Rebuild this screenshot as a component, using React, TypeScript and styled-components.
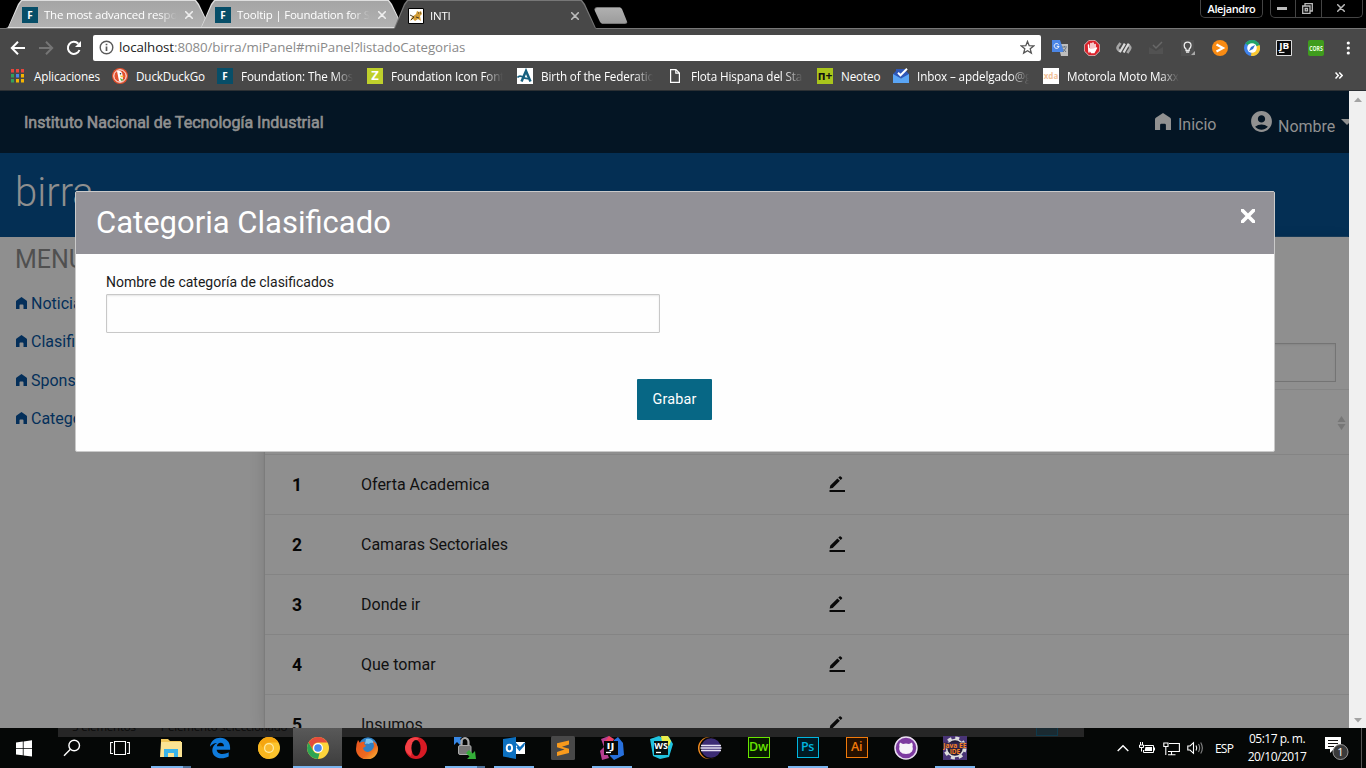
import React from "react";
import styled, { createGlobalStyle, css } from "styled-components";
import { MdAccountCircle } from "react-icons/md";

const Global = createGlobalStyle`
  *, *::before, *::after { box-sizing: border-box; }
  body { margin: 0; background: #000; overflow: hidden; }
  svg { display: block; flex: none; }
`;

const uiFont = css`font-family: "Open Sans", "Noto Sans", sans-serif;`;

const Screen = styled.div`
  width: 1366px;
  height: 768px;
  display: flex;
  flex-direction: column;
  overflow: hidden;
  ${uiFont}
`;

/* ---------- Browser ---------- */

const TabStrip = styled.div`
  height: 28px;
  flex: none;
  display: flex;
  padding-left: 6px;
  background: #000;
`;

const Tab = styled.div<{ $active?: boolean }>`
  position: relative;
  z-index: ${(p) => (p.$active ? 2 : 1)};
  width: 206px;
  height: ${(p) => (p.$active ? 29 : 28)}px;
  margin-right: -13px;
  padding: 2px 0 0 16px;
  display: flex;
  align-items: center;
  color: #fff;
  font-size: 12px;
  background: ${(p) => (p.$active ? "#777" : "#dedede")};
  clip-path: polygon(0 100%, 2px 97%, 12px 4px, 15px 0, 190px 0, 193px 4px, 204px 97%, 206px 100%);
  &::before {
    content: "";
    position: absolute;
    z-index: -1;
    inset: 1px 1px ${(p) => (p.$active ? 0 : 1)}px;
    background: ${(p) => (p.$active ? "#484848" : "linear-gradient(#a5a5a5, #b2b2b2)")};
    clip-path: polygon(0 100%, 2px 97%, 12px 4px, 15px 0, 188px 0, 191px 4px, 202px 97%, 204px 100%);
  }
`;

const TabTitle = styled.span`
  width: 133px;
  margin: 0 8px 0 6px;
  overflow: hidden;
  white-space: nowrap;
  font-size: 11.5px;
  letter-spacing: -0.22px;
  line-height: 18px;
  mask-image: linear-gradient(90deg, #000 86%, transparent);
`;

const NewTab = styled.div`
  width: 34px;
  height: 17px;
  margin: 7px 0 0 9px;
  border-radius: 3px;
  background: linear-gradient(#b0b0b0, #9c9c9c);
  border: 1px solid #777;
  clip-path: polygon(1px 0, 26px 0, 28px 2px, 34px 100%, 8px 100%, 6px 15px, 0 2px);
`;

const WindowButtons = styled.div`
  margin-left: auto;
  padding-right: 3px;
  display: flex;
  gap: 7px;
`;

const Profile = styled.div`
  width: 63px;
  height: 18px;
  border: 1px solid #444;
  border-top: 0;
  border-radius: 0 0 5px 5px;
  color: #fff;
  font-size: 11px;
  font-weight: 600;
  letter-spacing: -0.4px;
  line-height: 17px;
  text-align: center;
`;

const Controls = styled.div`
  display: flex;
  height: 18px;
  border: 1px solid #444;
  border-top: 0;
  border-radius: 0 0 5px 5px;
`;

const Control = styled.div<{ $w: number }>`
  width: ${(p) => p.$w}px;
  padding: 0 2px 1px 0;
  display: grid;
  place-items: center;
  & + & { border-left: 1px solid #444; }
`;

const Toolbar = styled.div`
  height: 34px;
  flex: none;
  display: flex;
  align-items: center;
  padding: 5px 0 0 10px;
  background: #484848;
  border-top: 1px solid #777;
`;

const NavIcons = styled.div`
  display: flex;
  gap: 12px;
  width: 83px;
  margin-top: -1px;
`;

const Omnibox = styled.div`
  width: 948px;
  height: 26px;
  flex: none;
  padding: 0 6px;
  display: flex;
  align-items: center;
  background: #fff;
  border-radius: 2px;
  color: #8a8a8a;
  font-size: 13.3px;
  b { font-weight: 400; color: #222; }
  svg { margin-top: -1px; }
  svg:last-child { margin-left: auto; }
`;

const Url = styled.span`
  margin-left: 5px;
  letter-spacing: -0.08px;
  line-height: 20px;
  padding-bottom: 2px;
`;

const Extensions = styled.div`
  display: flex;
  gap: 16px;
  margin: -1px 0 0 11px;
`;

const Bookmarks = styled.div`
  height: 29px;
  flex: none;
  display: flex;
  align-items: center;
  padding: 0 0 1px 10px;
  background: #484848;
  border-bottom: 1px solid #2c3034;
`;

const Bookmark = styled.div<{ $w: number }>`
  width: ${(p) => p.$w}px;
  flex: none;
  display: flex;
  align-items: center;
  gap: 8px;
  color: #fff;
`;

const BookmarkText = styled.span<{ $fade?: boolean }>`
  width: ${(p) => (p.$fade ? "112px" : "auto")};
  overflow: ${(p) => (p.$fade ? "hidden" : "visible")};
  white-space: nowrap;
  font-size: 11.7px;
  letter-spacing: -0.13px;
  line-height: 18px;
  mask-image: ${(p) => (p.$fade ? "linear-gradient(90deg, #000 83%, transparent)" : "none")};
`;

const Tile = styled.span<{ $bg: string; $fg: string; $size?: number }>`
  width: 16px;
  height: 16px;
  flex: none;
  display: grid;
  place-items: center;
  overflow: hidden;
  background: ${(p) => p.$bg};
  color: ${(p) => p.$fg};
  font-size: ${(p) => p.$size ?? 11}px;
  font-weight: 700;
  line-height: 1;
`;

/* ---------- Page ---------- */

const Viewport = styled.div`
  position: relative;
  height: 637px;
  flex: none;
  display: flex;
  font-family: Roboto, sans-serif;
  overflow: hidden;
`;

const Page = styled.div`
  width: 1349px;
  overflow: hidden;
  background: #8f8f8f;
`;

const TopBar = styled.header`
  height: 62px;
  display: flex;
  align-items: center;
  padding-left: 24px;
  background: #041524;
  color: #919191;
`;

const Institute = styled.h1`
  margin: 0;
  padding-top: 2px;
  font-size: 16px;
  font-weight: 400;
  -webkit-text-stroke: 0.6px #919191;
  line-height: 20px;
`;

const UserNav = styled.nav`
  margin-left: auto;
  display: flex;
  align-items: center;
  font-size: 16px;
  line-height: 20px;
`;

const NavLink = styled.span<{ $gap: number; $w: number; $shift: number }>`
  width: ${(p) => p.$w}px;
  display: flex;
  align-items: center;
  gap: ${(p) => p.$gap}px;
  white-space: nowrap;
  span { padding-top: ${(p) => p.$shift}px; }
  svg { margin-top: -1px; }
`;

const Banner = styled.div`
  height: 84px;
  padding: 16px 15px 0;
  background: #042f54;
  color: #8f8f8f;
  font-size: 40px;
  font-weight: 300;
  line-height: 48px;
`;

const Body = styled.div`
  display: flex;
  height: 491px;
`;

const Sidebar = styled.aside`
  width: 265px;
  flex: none;
  padding: 8px 15px;
`;

const MenuTitle = styled.h2`
  margin: 0 0 25px;
  color: #505050;
  font-size: 25px;
  font-weight: 400;
  line-height: 30px;
`;

const MenuItem = styled.div`
  height: 38.4px;
  display: flex;
  gap: 4px;
  padding-left: 1px;
  color: #042f5a;
  font-size: 16px;
  line-height: 8px;
  svg { margin-top: -3px; }
  span { white-space: nowrap; }
`;

const Main = styled.main`
  flex: 1;
  padding-top: 106px;
  background: #8f8f8f;
  box-shadow: -1px 0 1px #7c7c7c, -4px 0 12px rgba(0, 0, 0, 0.09);
`;

const Search = styled.div`
  width: 300px;
  height: 39px;
  margin: 0 13px 7px auto;
  border: 1px solid #747474;
  box-shadow: inset 0 1px 2px rgba(0, 0, 0, 0.08);
`;

const TableHead = styled.div`
  height: 66px;
  display: flex;
  align-items: center;
  justify-content: flex-end;
  padding: 1px 3px 0 0;
  border-top: 1px solid #858585;
  border-bottom: 1px solid #848484;
`;

const Row = styled.div`
  height: 60px;
  display: grid;
  grid-template-columns: 69px 467px 1fr;
  align-items: center;
  padding-left: 27px;
  border-bottom: 1px solid #848484;
  color: #111;
  font-size: 16px;
  b { color: #060606; font-size: 17.5px; font-weight: 700; }
  svg { margin-top: -1px; }
`;

const Scrollbar = styled.div`
  width: 17px;
  padding: 6px 0 5px;
  display: flex;
  flex-direction: column;
  align-items: center;
  justify-content: space-between;
  background: #f0f0f0;
`;

const Modal = styled.section`
  position: absolute;
  left: 75px;
  top: 100px;
  width: 1200px;
  height: 261px;
  border: 1px solid #cacaca;
  border-radius: 2px;
  background: #fefefe;
`;

const ModalHead = styled.div`
  height: 62px;
  display: flex;
  justify-content: space-between;
  padding: 12px 19px 0 20px;
  background: #929197;
  color: #fff;
  font-size: 31px;
  line-height: 38px;
  svg { margin-top: 5px; }
`;

const Form = styled.form`
  padding: 18px 31px 0 30px;
`;

const FieldLabel = styled.label`
  display: block;
  color: #1a1a1a;
  font-size: 14px;
  line-height: 20px;
`;

const Input = styled.input`
  display: block;
  width: 554px;
  height: 39px;
  margin: 2px 0 46px;
  border: 1px solid #c8c8c8;
  border-radius: 1px;
  background: #fefefe;
  box-shadow: inset 0 1px 2px rgba(10, 10, 10, 0.1);
`;

const Save = styled.button`
  display: block;
  width: 75px;
  height: 41px;
  margin: 0 0 0 531px;
  padding: 0;
  border: 0;
  border-radius: 1px;
  background: #076785;
  color: #fefefe;
  font: 14.4px Roboto, sans-serif;
  letter-spacing: 0.2px;
`;

/* ---------- Taskbar ---------- */

const Taskbar = styled.footer`
  position: relative;
  z-index: 0;
  height: 40px;
  flex: none;
  display: flex;
  background: #050706;
  color: #fff;
`;

const Ghost = styled.div`
  position: absolute;
  z-index: -1;
  left: 58px;
  top: 0;
  width: 1026px;
  height: 9px;
  overflow: hidden;
  display: flex;
  gap: 23px;
  padding-left: 14px;
  background: #262626;
  color: #0b0b0b;
  font-size: 11.5px;
  letter-spacing: -0.2px;
  line-height: 16px;
  white-space: nowrap;
  span { margin-top: -9px; }
  span + span + span { margin-left: -10px; }
`;

const GhostView = styled.i`
  width: 22px;
  height: 9px;
  margin: -1px 26px 0 auto;
  border: 1px solid #0f3a4c;
  background: #1a2a31;
`;

const Task = styled.div<{ $w?: number; $open?: boolean; $active?: boolean; $stack?: boolean }>`
  width: ${(p) => p.$w ?? 49}px;
  flex: none;
  display: grid;
  place-items: center;
  background: ${(p) => (p.$active ? "linear-gradient(#595959, #3c3c3c)" : "none")};
  box-shadow: ${(p) => (p.$active ? "inset 0 -2px #7ab4ee" : "none")};
  ${(p) =>
    p.$open &&
    css`
      background: linear-gradient(90deg, #7ab4ee ${p.$stack ? 32 : 40}px, #4d7199 0) center bottom / 40px 2px no-repeat;
    `}
`;

const AppTile = styled.span<{ $c: string; $bg: string }>`
  width: 22px;
  height: 21px;
  margin-top: -2px;
  border: 1.5px solid ${(p) => p.$c};
  background: ${(p) => p.$bg};
  color: ${(p) => p.$c};
  font-size: 12.5px;
  font-weight: 600;
  letter-spacing: -0.3px;
  line-height: 18px;
  text-align: center;
`;

const Spacer = styled.div<{ $w: number }>`
  width: ${(p) => p.$w}px;
  flex: none;
`;

const Tray = styled.div`
  margin-left: auto;
  padding-right: 11px;
  display: flex;
  align-items: center;
  font-size: 12px;
`;

const Lang = styled.span`
  margin-left: 11px;
  width: 32px;
  font-size: 12px;
  letter-spacing: -0.8px;
`;

const Clock = styled.div`
  width: 60px;
  text-align: center;
  font-size: 12px;
  letter-spacing: -0.5px;
  line-height: 18px;
  white-space: nowrap;
  margin-right: 17px;
`;

const Desktop = styled.i`
  width: 5px;
  border-left: 1px solid #555;
`;

/* ---------- Icons ---------- */

const X = ({ s = 8, c = "#eee", w = 1.6 }: { s?: number; c?: string; w?: number }) => (
  <svg width={s} height={s} viewBox="0 0 8 8" stroke={c} strokeWidth={w} strokeLinecap="round">
    <path d="M.7 .7 7.3 7.3M7.3 .7 .7 7.3" />
  </svg>
);

const Home = ({ w, h, c }: { w: number; h: number; c: string }) => (
  <svg width={w} height={h} viewBox="0 0 16 17" preserveAspectRatio="none" fill={c}>
    <path d="M8 0 15.2 4.8Q16 5.4 16 6.4V17H10.9V12Q10.9 10.8 9.7 10.8H6.3Q5.1 10.8 5.1 12V17H0V6.4Q0 5.4.8 4.8Z" />
  </svg>
);

const Edit = () => (
  <svg width="17" height="17" viewBox="0 0 17 17" fill="#0a0a0a">
    <path d="M1.5 14H17V16H1.5Z" />
    <path d="M1.7 12.4 2.3 9.4 9.4 2.4 11.9 4.8 4.7 11.900ZM10.3 1.500 11.500.4Q12.100-.1 12.800.5L13.900 1.600Q14.500 2.300 13.900 2.800L12.700 3.900Z" />
  </svg>
);

const Fav = () => <Tile $bg="#074e68" $fg="#fff" $size={10}>F</Tile>;

const CatIcon = () => (
  <svg width="16" height="16" viewBox="0 0 16 16">
    <path d="M.5.5h15v15H.5z" fill="#fff" stroke="#000" />
    <path d="M2 13 4 9 8 6 9 3 11 4 13 3 14 6 12 8 13 13 10 11 7 13 5 11Z" fill="#d19b35" />
    <path d="M2 7 6 9 3 12M8 9 11 10M10 5h1M12 5h1" stroke="#493b24" fill="none" />
  </svg>
);

const Back = ({ c, flip }: { c: string; flip?: boolean }) => (
  <svg width="16" height="16" viewBox="0 0 16 16" fill="none" stroke={c} strokeWidth="2">
    <path d={flip ? "M1 8H14M8 1.8 14.2 8 8 14.2" : "M15 8H2M8 1.8 1.8 8 8 14.2"} />
  </svg>
);

const Reload = () => (
  <svg width="16" height="16" viewBox="0 0 16 16" fill="none" stroke="#fff" strokeWidth="2">
    <path d="M13.5 10A6 6 0 1 1 12.3 3.8" />
    <path d="M15 1V7H9Z" fill="#fff" stroke="none" />
  </svg>
);

const Info = () => (
  <svg width="15" height="15" viewBox="0 0 15 15" fill="none" stroke="#5a5a5a" strokeWidth="1.4">
    <circle cx="7.5" cy="7.5" r="6.3" />
    <path d="M7.5 6.5V11M7.5 3.8V5.3" strokeWidth="1.7" />
  </svg>
);

const Star = () => (
  <svg width="15" height="15" viewBox="0 0 16 16" fill="none" stroke="#555" strokeWidth="1.4">
    <path d="M8 1.5 9.8 6 14.6 6.3 10.9 9.4 12.1 14 8 11.5 3.9 14 5.1 9.4 1.4 6.3 6.2 6Z" />
  </svg>
);

const Apps = () => (
  <svg width="16" height="16" viewBox="0 0 16 16">
    {["#e8453c", "#e8453c", "#e8453c", "#34a05a", "#4a86e8", "#f4b400", "#34a05a", "#f4b400", "#f4b400"].map((c, i) => (
      <rect key={i} x={1 + (i % 3) * 5} y={1 + Math.floor(i / 3) * 5} width="3" height="3.5" fill={c} />
    ))}
  </svg>
);

const Duck = () => (
  <svg width="16" height="16" viewBox="0 0 16 16">
    <circle cx="8" cy="8" r="8" fill="#e3502d" />
    <circle cx="8" cy="8" r="6.2" fill="#e3502d" stroke="#fff" />
    <path d="M5 3Q10 2 10.5 7L11 12Q9 15 7 13Z" fill="#fff" />
    <path d="M8 7.5 12.5 8 9 9.5Z" fill="#f9c22d" />
    <path d="M8 10 12 12 9 13Z" fill="#5fae46" />
    <circle cx="8.5" cy="5.8" r=".8" fill="#234" />
  </svg>
);

const Arrow = () => (
  <svg width="16" height="16" viewBox="0 0 16 16">
    <path d="M0 0h16v16H0z" fill="#fff" />
    <path d="M4.5 13.5 9 3 13.5 13.5" fill="none" stroke="#17607f" strokeWidth="2.5" />
    <path d="M.5 9.5Q2 7.3 5 8.5 8 11 12 10.5" fill="none" stroke="#17607f" strokeWidth="1.7" />
  </svg>
);

const Doc = () => (
  <svg width="16" height="16" viewBox="0 0 16 16" fill="none" stroke="#fff" strokeWidth="1.2">
    <path d="M3.6 1.6H9L12.4 5V14.4H3.6ZM8.8 1.6V5.2H12.4" />
  </svg>
);

const Inbox = () => (
  <svg width="16" height="16" viewBox="0 0 16 16">
    <path d="M0 6 3 3V1H13V3L16 6V10H0Z" fill="#2e57b8" />
    <path d="M0 6 8 10.5 16 6V15H0Z" fill="#5aa5f5" />
    <path d="M5 4.8 7.5 7.3 14 .8" fill="none" stroke="#fff" strokeWidth="2" />
  </svg>
);

const Translate = () => (
  <svg width="16" height="16" viewBox="0 0 16 16">
    <path d="M6 4h10v12H9z" fill="#bdbdbd" />
    <path d="M0 0h8l4 12H0z" fill="#4b86e6" />
    <path d="M6.6 4.6A2.4 2.4 0 1 0 7 6.3H4.8" fill="none" stroke="#fff" />
    <path d="M10 7h5M12.5 6v1M11 12 14 8M11.5 9 14 12" stroke="#687685" />
  </svg>
);

const Stop = () => (
  <svg width="16" height="16" viewBox="0 0 16 16">
    <path d="M5 .3h6L15.7 5v6L11 15.7H5L.3 11V5Z" fill="#d9222a" stroke="#eee" strokeWidth=".7" />
    <path d="M5 12 4.5 5M7 8V3.4M9 8V3.1M11 9V4.4M5 8.5 7.5 12.5H10L12.5 8" fill="#fff" stroke="#fff" strokeWidth="1.5" strokeLinecap="round" />
  </svg>
);

const Swirl = () => (
  <svg width="16" height="16" viewBox="0 0 16 16" fill="none" strokeWidth="2.6">
    <path d="M4.5 3 1.8 6.8Q1 8.3 2.2 9.5L4 11.3" stroke="#a5a5a5" />
    <path d="M11.8 4.2 13.8 6.5Q14.8 7.8 13.8 9.2L11.3 13" stroke="#a5a5a5" />
    <path d="M3.8 12.3 8.8 3.6M7.6 12.5 12.6 3.7" stroke="#dadada" strokeWidth="2.2" />
  </svg>
);

const DimInbox = () => (
  <svg width="16" height="16" viewBox="0 0 16 16" fill="none">
    <path d="M1 7 8 11 15 7V14H1Z" fill="#525252" />
    <path d="M5 5 8 8 14 2" stroke="#686868" strokeWidth="1.5" />
  </svg>
);

const Bulb = () => (
  <svg width="16" height="16" viewBox="0 0 16 16">
    <path d="M1 0h13v16H1z" fill="#505050" />
    <path d="M6 10.5V9Q4 7.5 4.2 5.5A3.4 3.4 0 0 1 11 5.5Q11 7.5 9.2 9V10.5ZM6 12.2H9.2" fill="none" stroke="#eee" strokeWidth="1.3" />
    <path d="M15 11v4h-4z" fill="#aaa" />
  </svg>
);

const Play = () => (
  <svg width="16" height="16" viewBox="0 0 16 16">
    <circle cx="8" cy="8" r="8" fill="#f98b13" />
    <path d="M4.5 4.5 11 8 4.5 11.5" fill="none" stroke="#fff" strokeWidth="2.2" />
  </svg>
);

const Compass = () => (
  <svg width="16" height="16" viewBox="0 0 16 16">
    <circle cx="8" cy="8" r="8" fill="#3f83ee" />
    <path d="M8 0A8 8 0 0 1 15.8 10L8 8 1.4 3.6A8 8 0 0 1 8 0Z" fill="#21a366" />
    <path d="M15.5 5A8 8 0 0 1 7 16L8 8Z" fill="#fac832" />
    <circle cx="8" cy="8" r="4.8" fill="#fff" />
    <path d="M5 11 7 7 11 5 9 9Z" fill="#2f6fd0" />
  </svg>
);

const JetBrains = () => (
  <svg width="16" height="16" viewBox="0 0 16 16">
    <path d="M.5.5h15v15H.5z" fill="#0b0b0b" stroke="#ddd" />
    <text x="3.2" y="9" fill="#fff" fontSize="8.5" fontWeight="700" fontFamily="Open Sans" textLength="10" lengthAdjust="spacingAndGlyphs">JB</text>
    <path d="M3 12.4h5.5" stroke="#fff" strokeWidth="1.1" />
  </svg>
);

const Cors = () => (
  <svg width="16" height="16" viewBox="0 0 16 16">
    <rect width="16" height="16" rx="2" fill="#3f9c1d" />
    <text x="1.3" y="10.6" fill="#e9ffe0" fontSize="7" fontWeight="700" fontFamily="Open Sans" textLength="13.5" lengthAdjust="spacingAndGlyphs">CORS</text>
  </svg>
);

const Windows = () => (
  <svg width="17" height="17" viewBox="0 0 17 17" fill="#fff">
    <path d="M0 2.4 6.8 1.5V8H0ZM7.6 1.4 16 .2V8H7.6ZM0 8.8H6.8V15.3L0 14.4ZM7.6 8.8H16V16.6L7.6 15.4Z" />
  </svg>
);

const SearchIcon = () => (
  <svg width="18" height="18" viewBox="0 0 18 18" fill="none" stroke="#fff" strokeWidth="1.4">
    <circle cx="11.2" cy="6.5" r="5.3" />
    <path d="M7.4 10.3 1 16.7" />
  </svg>
);

const TaskView = () => (
  <svg width="20" height="16" viewBox="0 0 20 16" fill="none" stroke="#fff" strokeWidth="1.1">
    <path d="M4.5 1.5h11v13h-11zM3 2.5H.6v11H3M17 2.5h2.4v11H17" />
  </svg>
);

const Explorer = () => (
  <svg width="22" height="20" viewBox="0 0 22 20">
    <path d="M1 1h7l2 2h11v15H1z" fill="#f1c75a" />
    <path d="M1 4h21v15H0z" fill="#fbe393" />
    <path d="M4 11h14v8h-4v-4H8v4H4z" fill="#39b4ea" />
  </svg>
);

const Edge = () => (
  <svg width="22" height="22" viewBox="0 0 24 24" fill="#0f7bdc">
    <path d="M1 10.6C2 4 6.8.8 12.2.8 19 .8 23 5.7 23 11.5V14H8.4c.2 3 3 4.6 6.2 4.6 2.5 0 4.9-.7 6.9-1.9V21.4C19 22.7 16.4 23.3 13.6 23.3 7.5 23.3 3.6 19.6 3.6 14.4 3.6 10.8 5.6 8 8.8 6.5 5.5 6.7 3 8 1 10.6ZM8.6 10H16.3C16.3 7.5 15 6.2 12.7 6.2 10.5 6.2 9 7.7 8.6 10Z" />
  </svg>
);

const Chrome = ({ gold }: { gold?: boolean }) => (
  <svg width="22" height="22" viewBox="0 0 22 22">
    <circle cx="11" cy="11" r="11" fill={gold ? "#fcc42c" : "#fdd43b"} />
    <path d="M1.5 5.5A11 11 0 0 1 20.5 5.5H11A5.5 5.5 0 0 0 6.2 13.7Z" fill={gold ? "#f5a510" : "#e44b3c"} />
    <path d="M1.5 5.5 6.2 13.7A5.5 5.5 0 0 0 12.5 16.3L11 22A11 11 0 0 1 1.5 5.5Z" fill={gold ? "#f8b51e" : "#2da453"} />
    <circle cx="11" cy="11" r="5" fill={gold ? "#fde9a5" : "#fff"} />
    <circle cx="11" cy="11" r="3.8" fill={gold ? "#f8b82c" : "#4a86ee"} />
  </svg>
);

const Firefox = () => (
  <svg width="22" height="22" viewBox="0 0 22 22">
    <defs>
      <linearGradient id="fx" x1="0" y1="0" x2="1" y2="1">
        <stop offset="0" stopColor="#e8531e" />
        <stop offset=".6" stopColor="#ee6a1f" />
        <stop offset="1" stopColor="#fbc43c" />
      </linearGradient>
    </defs>
    <circle cx="12" cy="9.5" r="9.3" fill="#2f80c4" />
    <path d="M10 2Q16 1 18 6Q14 5 13 7Q11 6 9 7Z" fill="#7cc4ee" />
    <path d="M2 3 4 6Q6 4 9 5L8 7 10 9 7 11Q8 15 12 15 17 14 18 9L17 4Q22 7 22 12A11 10.5 0 0 1 0 12Q0 7 2 3Z" fill="url(#fx)" />
  </svg>
);

const Opera = () => (
  <svg width="22" height="22" viewBox="0 0 22 22">
    <ellipse cx="11" cy="11" rx="11" ry="11" fill="#d71a24" />
    <path d="M3 3Q8-1 14 1L8 10 6 19Q0 16 0 10Z" fill="#f44146" />
    <ellipse cx="11" cy="11" rx="4.6" ry="8" fill="#070707" />
  </svg>
);

const Vpn = () => (
  <svg width="24" height="24" viewBox="0 0 24 24">
    <path d="M1 1H9L7 3 10 6 7 9 4 6 1 9Z" fill="#3787e4" />
    <path d="M8.5 11V6A3.5 4 0 0 1 15.5 6V11" fill="none" stroke="#a8a8a8" strokeWidth="2.2" />
    <rect x="5.5" y="9.5" width="12.5" height="9" rx="1.5" fill="#777" stroke="#aaa" />
    <path d="M23 23H14L16.5 20.5 13 17 16 14 19.5 17.5 22 15Z" fill="#34ad38" />
  </svg>
);

const Outlook = () => (
  <svg width="24" height="24" viewBox="0 0 24 24">
    <path d="M13 6H23V18H13Z" fill="#fff" />
    <path d="M13 7 18 12 23 7M15 11 17.5 14 22 9" fill="none" stroke="#0c70c0" strokeWidth="1.7" />
    <path d="M1 3 14 1V23L1 20.5Z" fill="#0c70c0" />
    <ellipse cx="7.4" cy="12" rx="2.7" ry="3.4" fill="none" stroke="#fff" strokeWidth="1.9" />
  </svg>
);

const Sublime = () => (
  <svg width="24" height="24" viewBox="0 0 24 24">
    <rect width="24" height="24" rx="1.5" fill="#484848" />
    <path d="M18 4.5V8.5L11 10.7 18 12.8V17L6 20V16L13.5 13.5 6 11.3V7.3Z" fill="#f89a1c" />
  </svg>
);

const Idea = () => (
  <svg width="24" height="24" viewBox="0 0 24 24">
    <path d="M1 3 9 0 13 5 7 17 9 22 2 24 0 15 4 11Z" fill="#b53e91" />
    <path d="M9 0 14 3 12 8 4 7Z" fill="#ee4263" />
    <path d="M14 4 18 1 23 7 24 19 14 24 10 20Z" fill="#2870dc" />
    <path d="M4 5h14v14H4z" fill="#070707" />
    <text x="6.5" y="13" fill="#fff" fontSize="9" fontWeight="700" fontFamily="Open Sans" textLength="8" lengthAdjust="spacingAndGlyphs">IJ</text>
    <path d="M6 16.5h5" stroke="#fff" strokeWidth="1.3" />
  </svg>
);

const WebStorm = () => (
  <svg width="24" height="24" viewBox="0 0 24 24">
    <path d="M1 3 10 0 15 3 20 1 24 8 20 21 11 23 4 20Z" fill="#20c3df" />
    <path d="M12 0 19 0 22 5 20 10 13 6Z" fill="#e9ed4b" />
    <path d="M5 5h14v14H5z" fill="#061010" />
    <text x="5.3" y="13" fill="#fff" fontSize="8.5" fontWeight="700" fontFamily="Open Sans" textLength="13.5" lengthAdjust="spacingAndGlyphs">WS</text>
    <path d="M7 16.5h5" stroke="#fff" strokeWidth="1.3" />
  </svg>
);

const Eclipse = () => (
  <svg width="24" height="24" viewBox="0 0 24 24">
    <circle cx="11" cy="12" r="11" fill="#f38c1f" />
    <circle cx="12.5" cy="12" r="11" fill="#070707" />
    <circle cx="13" cy="12" r="9.8" fill="#3c2c75" />
    <path d="M3 9.5h20M2.5 12h21M3 14.5h20" stroke="#e7e3f4" strokeWidth="1.3" />
  </svg>
);

const GitHub = () => (
  <svg width="24" height="24" viewBox="0 0 24 24">
    <circle cx="12" cy="12" r="11" fill="#7d3aa0" stroke="#eadff0" strokeWidth="1.5" />
    <path d="M6 6.5 9 8Q12 7 15 8L18 6.5Q19 8.5 18.5 10.5 19.5 13 18 15.5 16 18 12 18 8 18 6 15.5 4.5 13 5.5 10.5 5 8.5 6 6.5Z" fill="#f7f3f9" />
  </svg>
);

const JavaEE = () => (
  <svg width="24" height="24" viewBox="0 0 24 24">
    <path d="M0 0h24v24H0z" fill="#493476" />
    <circle cx="12" cy="12" r="10" fill="none" stroke="#ddd" strokeWidth="3" strokeDasharray="4 3.85" />
    <circle cx="12" cy="12" r="8.5" fill="#211a35" stroke="#ddd" strokeWidth="1.5" />
    <path d="M0 6.5h24v6H0z" fill="#352750" />
    <g fill="#f48226" fontFamily="Open Sans" fontSize="7" fontWeight="700">
      <text x=".3" y="11.7" textLength="14" lengthAdjust="spacingAndGlyphs">Java</text>
      <text x="16" y="11.7" textLength="7.5" lengthAdjust="spacingAndGlyphs">EE</text>
      <text x="6.7" y="18" textLength="10.5" lengthAdjust="spacingAndGlyphs">IDE</text>
    </g>
  </svg>
);

const TrayIcons = () => (
  <>
    <svg width="12" height="8" viewBox="0 0 12 8" fill="none" stroke="#fff" strokeWidth="1.4"><path d="M.7 7 6 1.7 11.3 7" /></svg>
    <Spacer $w={10} />
    <svg width="16" height="12" viewBox="0 0 16 12" fill="none" stroke="#fff">
      <path d="M5.5 3.5H14.5V10.5H4.5V8M15.5 5.5V8.5M1.5 0V3M3.5 0V3M.5 3H4.5V5.5H.5ZM2.5 5.5V9.5" />
      <path d="M6.5 5h6.5v4H5.5Z" fill="#fff" stroke="none" />
    </svg>
    <Spacer $w={8} />
    <svg width="17" height="15" viewBox="0 0 17 15" fill="none" stroke="#fff" strokeWidth="1.1">
      <path d="M6 2.5H16.4V10.5H5M8.5 10.5V13.5M5 13.8H12.5M.8 2H5V5.5H.8ZM2.8 5.5V14" />
    </svg>
    <Spacer $w={7} />
    <svg width="17" height="14" viewBox="0 0 17 14" fill="none" stroke="#fff" strokeWidth="1.1">
      <path d="M.8 5H3L6.5 1.7V12.3L3 9H.8ZM9 4.5Q10.5 7 9 9.5" />
      <path d="M11.5 3Q13.8 7 11.5 11M13.7 1.5Q17 7 13.7 12.5" stroke="#888" />
    </svg>
  </>
);

const Notice = () => (
  <svg width="26" height="26" viewBox="0 0 26 26">
    <path d="M1 2H17V14H10L6 18V14H1Z" fill="#fff" />
    <path d="M4 5.5H14M4 8.5H14M4 11.5H10" stroke="#111" />
    <circle cx="16.5" cy="17" r="7.5" fill="#3a3a3a" stroke="#999" />
    <text x="16.3" y="21" fill="#fff" fontSize="11" textAnchor="middle" fontFamily="Open Sans">1</text>
  </svg>
);

/* ---------- Data ---------- */

const bookmarks: { w: number; text: string; icon: React.ReactNode; fade?: boolean }[] = [
  { w: 102, text: "Aplicaciones", icon: <Apps /> },
  { w: 105, text: "DuckDuckGo", icon: <Duck /> },
  { w: 150, text: "Foundation: The Most", icon: <Fav />, fade: true },
  { w: 150, text: "Foundation Icon Fonts", icon: <Tile $bg="#bfd02c" $fg="#fff" $size={13}>Z</Tile>, fade: true },
  { w: 150, text: "Birth of the Federation", icon: <Arrow />, fade: true },
  { w: 150, text: "Flota Hispana del Star", icon: <Doc />, fade: true },
  { w: 76, text: "Neoteo", icon: <Tile $bg="#a9c51c" $fg="#111" $size={12}>п+</Tile> },
  { w: 150, text: "Inbox – apdelgado@g", icon: <Inbox />, fade: true },
  { w: 150, text: "Motorola Moto Maxx", icon: <Tile $bg="#fff" $fg="#f2c199" $size={8}>xda</Tile>, fade: true },
];

const menu = ["Noticias", "Clasificados", "Sponsors", "Categorias"];
const rows = ["Oferta Academica", "Camaras Sectoriales", "Donde ir", "Que tomar", "Insumos"];

export default function App() {
  return (
    <Screen>
      <Global />
      <TabStrip>
        <Tab><Fav /><TabTitle>The most advanced responsive</TabTitle><X /></Tab>
        <Tab><Fav /><TabTitle>Tooltip | Foundation for Sites</TabTitle><X /></Tab>
        <Tab $active><CatIcon /><TabTitle>INTI</TabTitle><X c="#bbb" /></Tab>
        <NewTab />
        <WindowButtons>
          <Profile>Alejandro</Profile>
          <Controls>
            <Control $w={24}><svg width="10" height="3"><path d="M0 0h10v3H0z" fill="#bbb" /></svg></Control>
            <Control $w={26}>
              <svg width="11" height="11" viewBox="0 0 11 11" fill="none" stroke="#bbb" strokeWidth="1.3"><path d="M3 2.5V.7H10.3V8H8.5M.7 3H8V10.3H.7ZM3.2 5.5H5.5V7.8H3.2Z" /></svg>
            </Control>
            <Control $w={41}><X c="#bbb" w={1.5} /></Control>
          </Controls>
        </WindowButtons>
      </TabStrip>
      <Toolbar>
        <NavIcons><Back c="#fff" /><Back c="#757575" flip /><Reload /></NavIcons>
        <Omnibox>
          <Info /><Url><b>localhost</b>:8080/birra/miPanel#miPanel?listadoCategorias</Url><Star />
        </Omnibox>
        <Extensions>
          <Translate /><Stop /><Swirl /><DimInbox /><Bulb /><Play /><Compass /><JetBrains /><Cors />
          <svg width="16" height="16" viewBox="0 0 16 16" fill="#fff"><circle cx="8.3" cy="3" r="1.6" /><circle cx="8.3" cy="8" r="1.6" /><circle cx="8.3" cy="13" r="1.6" /></svg>
        </Extensions>
      </Toolbar>
      <Bookmarks>
        {bookmarks.map((b) => (
          <Bookmark key={b.text} $w={b.w}>{b.icon}<BookmarkText $fade={b.fade}>{b.text}</BookmarkText></Bookmark>
        ))}
        <Spacer $w={142} />
        <svg width="8" height="7" viewBox="0 0 8 7" fill="none" stroke="#fff" strokeWidth="1.5"><path d="M.5.5 3.3 3.5 .5 6.5M4.3.5 7.1 3.5 4.3 6.5" /></svg>
      </Bookmarks>

      <Viewport>
        <Page>
          <TopBar>
            <Institute>Instituto Nacional de Tecnología Industrial</Institute>
            <UserNav>
              <NavLink $gap={7} $w={94} $shift={5}><Home w={16} h={17} c="#919191" /><span>Inicio</span></NavLink>
              <NavLink $gap={4} $w={92} $shift={9}><MdAccountCircle size={25} /><span>Nombre</span></NavLink>
              <svg width="8" height="6" viewBox="0 0 8 6"><path d="M0 0H12L6 6Z" fill="#919191" /></svg>
            </UserNav>
          </TopBar>
          <Banner>birra</Banner>
          <Body>
            <Sidebar>
              <MenuTitle>MENU</MenuTitle>
              {menu.map((m) => (
                <MenuItem key={m}><Home w={11} h={12} c="#042f5a" /><span>{m}</span></MenuItem>
              ))}
            </Sidebar>
            <Main>
              <Search />
              <TableHead>
                <svg width="9" height="14" viewBox="0 0 9 14" fill="#777"><path d="M4.5 0 8.5 6H.5ZM.5 8H8.5L4.5 14Z" /></svg>
              </TableHead>
              {rows.map((r, i) => (
                <Row key={r}><b>{i + 1}</b><span>{r}</span><Edit /></Row>
              ))}
            </Main>
          </Body>
        </Page>
        <Scrollbar>
          <svg width="8" height="5"><path d="M0 5 4 .5 8 5Z" fill="#a3a3a3" /></svg>
          <svg width="8" height="5"><path d="M0 0 4 4.5 8 0Z" fill="#a3a3a3" /></svg>
        </Scrollbar>
        <Modal>
          <ModalHead>Categoria Clasificado<X s={14} c="#fff" w={2.1} /></ModalHead>
          <Form>
            <FieldLabel htmlFor="nombre">Nombre de categoría de clasificados</FieldLabel>
            <Input id="nombre" />
            <Save type="button">Grabar</Save>
          </Form>
        </Modal>
      </Viewport>

      <Taskbar>
        <Ghost><span>5 elementos</span><span>1 elemento seleccionado</span><span>3.44 KB</span><GhostView /></Ghost>
        <Task $w={48}><Windows /></Task>
        <Task $w={48}><SearchIcon /></Task>
        <Task $w={48}><TaskView /></Task>
        <Spacer $w={2} />
        <Task $open $stack><Explorer /></Task>
        <Task><Edge /></Task>
        <Task><Chrome gold /></Task>
        <Task $active><Chrome /></Task>
        <Task><Firefox /></Task>
        <Task><Opera /></Task>
        <Task $open $stack><Vpn /></Task>
        <Task $open><Outlook /></Task>
        <Task><Sublime /></Task>
        <Task $open><Idea /></Task>
        <Task><WebStorm /></Task>
        <Task><Eclipse /></Task>
        <Task><AppTile $c="#68e500" $bg="#071900">Dw</AppTile></Task>
        <Task $open><AppTile $c="#00b5df" $bg="#001a24">Ps</AppTile></Task>
        <Task><AppTile $c="#f17a0a" $bg="#251000">Ai</AppTile></Task>
        <Task><GitHub /></Task>
        <Task $open><JavaEE /></Task>
        <Tray>
          <TrayIcons />
          <Lang>ESP</Lang>
          <Clock>05:17 p. m.<br />20/10/2017</Clock>
          <Notice />
        </Tray>
        <Desktop />
      </Taskbar>
    </Screen>
  );
}
